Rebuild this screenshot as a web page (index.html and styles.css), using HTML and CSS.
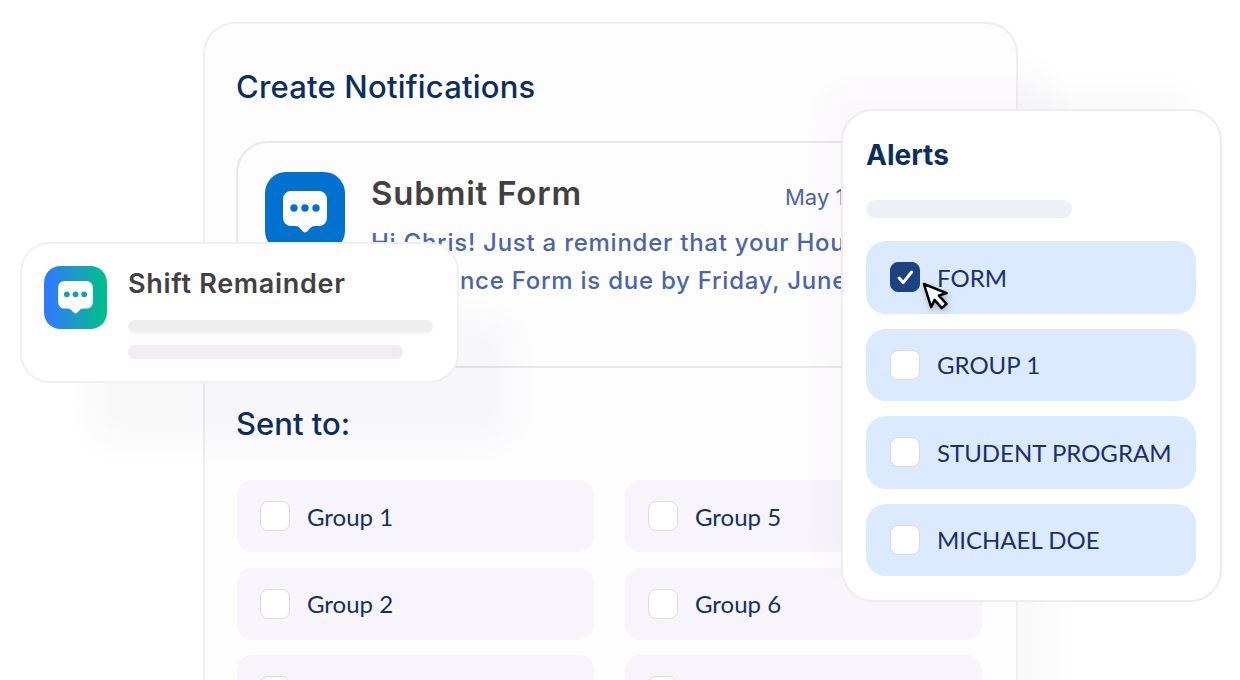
FILE: index.html
```html
<!DOCTYPE html>
<html lang="en">
<head>
<meta charset="utf-8">
<title>Create Notifications</title>
<link rel="stylesheet" href="styles.css">
</head>
<body>
<svg class="defs" width="0" height="0" aria-hidden="true">
  <defs>
    <linearGradient id="shiftGrad" x1="0" y1="0" x2="1" y2="0">
      <stop offset="0.08" stop-color="#2f7cf8"/>
      <stop offset="1" stop-color="#00c285"/>
    </linearGradient>
  </defs>
</svg>
<main class="stage">
  <section class="window main-card">
    <h1 class="main-title">Create Notifications</h1>
    <article class="notice">
      <svg class="app-icon" viewBox="0 0 80 80" aria-hidden="true">
        <rect width="80" height="80" rx="21" fill="#0071ce"/>
        <path d="M26 19h28a8 8 0 0 1 8 8v19a8 8 0 0 1-8 8h-4c-3 0-5 2-7 4.500-2 2.500-4 2.500-6 0-2-2.500-4-4.500-7-4.500h-4a8 8 0 0 1-8-8V27a8 8 0 0 1 8-8z" fill="#fff"/>
        <circle cx="29" cy="36" r="3.700" fill="#0071ce"/>
        <circle cx="40" cy="36" r="3.700" fill="#0071ce"/>
        <circle cx="51" cy="36" r="3.700" fill="#0071ce"/>
      </svg>
      <div class="notice-body">
        <div class="notice-head">
          <h2 class="notice-title">Submit Form</h2>
          <span class="notice-date">May 15</span>
        </div>
        <p class="notice-text">Hi Chris! Just a reminder that your Housing<br>Assistance Form is due by Friday, June 7.</p>
      </div>
    </article>
    <h2 class="sent-title">Sent to:</h2>
    <ul class="group-grid">
      <li class="group-row"><span class="box"></span>Group 1</li>
      <li class="group-row"><span class="box"></span>Group 5</li>
      <li class="group-row"><span class="box"></span>Group 2</li>
      <li class="group-row"><span class="box"></span>Group 6</li>
      <li class="group-row group-row-top"><span class="box"></span></li>
      <li class="group-row group-row-top"><span class="box"></span></li>
    </ul>
  </section>

  <section class="window shift-card">
    <svg class="shift-icon" viewBox="0 0 80 80" aria-hidden="true">
      <rect width="80" height="80" rx="21" fill="url(#shiftGrad)"/>
      <path d="M26 19h28a8 8 0 0 1 8 8v19a8 8 0 0 1-8 8h-4c-3 0-5 2-7 4.500-2 2.500-4 2.500-6 0-2-2.500-4-4.500-7-4.500h-4a8 8 0 0 1-8-8V27a8 8 0 0 1 8-8z" fill="#fff"/>
      <circle cx="29" cy="36" r="3.700" fill="#0f9fc4"/>
      <circle cx="40" cy="36" r="3.700" fill="#0f9fc4"/>
      <circle cx="51" cy="36" r="3.700" fill="#0f9fc4"/>
    </svg>
    <div class="shift-body">
      <h2 class="shift-title">Shift Remainder</h2>
      <div class="shift-bar"></div>
      <div class="shift-bar shift-bar-short"></div>
    </div>
  </section>

  <section class="window alerts-card">
    <h2 class="alerts-title">Alerts</h2>
    <div class="alerts-bar"></div>
    <ul class="alert-list">
      <li class="alert-row">
        <span class="box box-checked">
          <svg class="tick" viewBox="0 0 16 14" aria-hidden="true"><path d="M2 7.500l3.800 4.300 8-10" fill="none" stroke="#fff" stroke-width="2.800" stroke-linecap="round" stroke-linejoin="round"/></svg>
        </span>FORM
        <svg class="pointer" viewBox="0 0 28 32" aria-hidden="true"><path d="M2 2l7.500 24 3.500-7.500 7.500 8.500 5-4.500-8-8.500 8-2.500z" fill="#fff" stroke="#000" stroke-width="2.600" stroke-linejoin="round"/></svg>
      </li>
      <li class="alert-row"><span class="box"></span>GROUP 1</li>
      <li class="alert-row"><span class="box"></span>STUDENT PROGRAM</li>
      <li class="alert-row"><span class="box"></span>MICHAEL DOE</li>
    </ul>
  </section>
</main>
</body>
</html>
```
FILE: styles.css
```css
* { box-sizing: border-box; }

html, body {
  margin: 0;
  height: 680px;
  overflow: hidden;
  background: #fff;
}

.defs { position: absolute; }

.stage {
  position: relative;
  width: 1240px;
  height: 680px;
  overflow: hidden;
  font-family: "Lato", "Noto Sans", sans-serif;
}

h1, h2, p, ul { margin: 0; padding: 0; }
ul { list-style: none; }

.window {
  position: absolute;
  border: 2px solid #efedf0;
  background: #fff;
}

/* main window */
.main-card {
  left: 203px;
  top: 22px;
  width: 815px;
  height: 760px;
  padding: 44px 33px 0 31px;
  border-radius: 32px;
  background: #fefdfe;
  box-shadow: 40px 40px 30px -6px rgba(70, 60, 90, 0.03);
}

.main-title {
  font-family: "Inter", "Open Sans", sans-serif;
  font-size: 31px;
  line-height: 38px;
  font-weight: 500;
  letter-spacing: 0.2px;
  color: #0b2e5f;
}

.notice {
  display: flex;
  gap: 26px;
  width: 749px;
  height: 227px;
  margin-top: 35px;
  padding: 29px 0 0 27px;
  border: 2px solid #e9e7ea;
  border-radius: 32px;
  overflow: hidden;
}

.app-icon {
  flex: none;
  width: 80px;
  height: 80px;
}

.notice-body {
  flex: 1;
  min-width: 0;
}

.notice-head {
  display: grid;
  grid-template-columns: 414px auto;
  align-items: baseline;
}

.notice-title {
  font-family: "Inter", "Open Sans", sans-serif;
  font-size: 33px;
  line-height: 42px;
  font-weight: 600;
  letter-spacing: 0.8px;
  color: #414042;
}

.notice-date {
  font-family: "Inter", "Open Sans", sans-serif;
  font-size: 22px;
  color: #4a66a8;
}

.notice-text {
  margin-top: 10px;
  font-family: "Inter", "Open Sans", sans-serif;
  font-size: 24px;
  line-height: 38px;
  font-weight: 500;
  letter-spacing: 0.75px;
  white-space: nowrap;
  color: #4a66a8;
}

.sent-title {
  margin-top: 36px;
  font-family: "Inter", "Open Sans", sans-serif;
  font-size: 31px;
  line-height: 40px;
  font-weight: 500;
  color: #0b2e5f;
}

.group-grid {
  display: grid;
  grid-template-columns: 357px 357px;
  column-gap: 31px;
  row-gap: 15.500px;
  margin: 36px 0 0 1px;
}

.group-row {
  display: flex;
  align-items: center;
  gap: 17px;
  height: 72px;
  padding-left: 23px;
  border-radius: 15px;
  background: #f7f5fb;
  font-size: 24px;
  color: #0f3164;
}

.box {
  flex: none;
  display: flex;
  align-items: center;
  justify-content: center;
  width: 30px;
  height: 30px;
  border: 1px solid #dcdbe0;
  border-radius: 8px;
  background: #fff;
}

.box-checked {
  border-color: #1c427f;
  background: #1c427f;
}

.tick { width: 17px; height: 15px; }

/* shift reminder */
.shift-card {
  left: 20px;
  top: 242px;
  display: flex;
  gap: 21px;
  width: 439px;
  height: 141px;
  padding: 22px 24px 0 22px;
  border-color: #f1eff2;
  border-radius: 30px;
  box-shadow: 62px 68px 30px -8px rgba(70, 60, 90, 0.035);
}

.shift-icon {
  flex: none;
  width: 63px;
  height: 63px;
}

.shift-body { flex: 1; }

.shift-title {
  font-family: "Inter", "Open Sans", sans-serif;
  font-size: 27px;
  line-height: 36px;
  font-weight: 600;
  letter-spacing: 0.7px;
  color: #414042;
}

.shift-bar {
  height: 13px;
  margin-top: 18px;
  border-radius: 7px;
  background: #efedf0;
}

.shift-bar-short {
  width: 275px;
  height: 14px;
  margin-top: 12px;
}

/* alerts */
.alerts-card {
  left: 841px;
  top: 109px;
  width: 381px;
  height: 493px;
  padding: 25px 24px 0 23px;
  border-color: #eeecef;
  border-radius: 32px;
  box-shadow: -24px -26px 26px -4px rgba(70, 60, 90, 0.025);
}

.alerts-title {
  font-family: "Inter", "Open Sans", sans-serif;
  font-size: 28px;
  line-height: 38px;
  font-weight: 700;
  color: #0b2e5f;
}

.alerts-bar {
  width: 206px;
  height: 18px;
  margin-top: 26px;
  border-radius: 9px;
  background: #eef0f8;
}

.alert-list {
  display: flex;
  flex-direction: column;
  gap: 15px;
  margin-top: 23px;
}

.alert-row {
  position: relative;
  display: flex;
  align-items: center;
  gap: 17px;
  height: 72.500px;
  padding-left: 24px;
  border-radius: 20px;
  background: #dbeafe;
  font-size: 24px;
  color: #1a2f6b;
}

.pointer {
  position: absolute;
  left: 56px;
  top: 41px;
  width: 27px;
  height: 31px;
  filter: drop-shadow(1px 2px 3px rgba(0, 0, 0, 0.25));
}
```
